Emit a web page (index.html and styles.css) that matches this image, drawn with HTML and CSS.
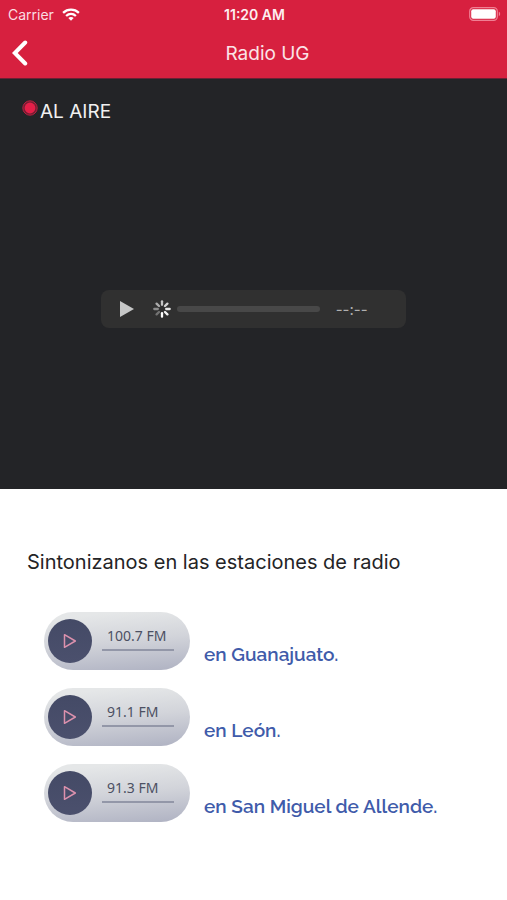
FILE: index.html
```html
<!DOCTYPE html>
<html lang="es">
<head>
<meta charset="utf-8">
<meta name="viewport" content="width=device-width, initial-scale=1">
<title>Radio UG</title>
<link rel="stylesheet" href="styles.css">
</head>
<body>
<header class="header">
  <div class="status">
    <div class="carrier">
      <span>Carrier</span>
      <svg class="wifi" width="18" height="13" viewBox="0 0 18 13" fill="none" stroke="currentColor" stroke-width="2.3" aria-hidden="true">
        <path d="M1.1 4.8C5.6.6 12.4.6 16.9 4.8M4.1 8C7 5.3 11 5.3 13.9 8"/>
        <path d="M9 12.8 6.3 10.1C7.8 8.7 10.2 8.7 11.7 10.1Z" fill="currentColor" stroke="none"/>
      </svg>
    </div>
    <time class="clock">11:20 AM</time>
    <svg class="battery" width="32" height="14" viewBox="0 0 32 14" aria-hidden="true">
      <rect x=".7" y=".7" width="27.6" height="12.6" rx="3.6" fill="none" stroke="#f07f93" stroke-width="1.2"/>
      <rect x="2.2" y="2.2" width="24.6" height="9.6" rx="2" fill="#fff"/>
      <path d="M29.8 4.8C31.6 5.2 31.6 8.8 29.8 9.2Z" fill="#f07f93"/>
    </svg>
  </div>
  <div class="navbar">
    <button class="back" type="button" aria-label="Volver">
      <svg width="16" height="26" viewBox="0 0 16 26" fill="none" stroke="currentColor" stroke-width="4" stroke-linecap="round" stroke-linejoin="miter" aria-hidden="true"><path d="M13.2 2.5 2.8 13l10.4 10.5"/></svg>
    </button>
    <h1 class="title">Radio UG</h1>
  </div>
</header>
<main>
  <section class="stage">
    <p class="live">
      <svg width="16" height="16" viewBox="0 0 16 16" aria-hidden="true"><circle cx="8" cy="8" r="7.2" fill="#741d32" stroke="#b72140" stroke-width="1"/><circle cx="8" cy="8" r="5.4" fill="#e51f48"/></svg>
      <span>AL AIRE</span>
    </p>
    <div class="player">
      <button class="play" type="button" aria-label="Reproducir">
        <svg width="14" height="16" viewBox="0 0 14 16" fill="currentColor" aria-hidden="true"><path d="M0 0 14 8 0 16Z"/></svg>
      </button>
      <svg class="spinner" width="18" height="18" viewBox="-9 -9 18 18" stroke="#fff" stroke-width="2.3" stroke-linecap="round" aria-hidden="true">
        <path d="M0-4.2V-7.7" opacity=".72"/>
        <path d="M3-3 5.4-5.4" opacity=".8"/>
        <path d="M4.2 0H7.7" opacity=".88"/>
        <path d="M3 3 5.4 5.4" opacity=".94"/>
        <path d="M0 4.2V7.7"/>
        <path d="M-3 3-5.4 5.4" opacity=".32"/>
        <path d="M-4.2 0H-7.7" opacity=".45"/>
        <path d="M-3-3-5.4-5.4" opacity=".6"/>
      </svg>
      <input class="track" type="range" min="0" max="100" value="0" aria-label="Progreso">
      <span class="time">--:--</span>
    </div>
  </section>
  <section class="stations">
    <h2 class="heading">Sintonizanos en las estaciones de radio</h2>
    <ul class="list">
      <li class="station">
        <button class="pill" type="button">
          <span class="disc"><svg width="14" height="16" viewBox="0 0 14 16" aria-hidden="true"><path d="M1.5 1.7 12.3 8 1.5 14.3Z"/></svg></span>
          <span class="freq">100.7 FM</span>
        </button>
        <a class="place" href="#guanajuato">en Guanajuato.</a>
      </li>
      <li class="station">
        <button class="pill" type="button">
          <span class="disc"><svg width="14" height="16" viewBox="0 0 14 16" aria-hidden="true"><path d="M1.5 1.7 12.3 8 1.5 14.3Z"/></svg></span>
          <span class="freq">91.1 FM</span>
        </button>
        <a class="place" href="#leon">en León.</a>
      </li>
      <li class="station">
        <button class="pill" type="button">
          <span class="disc"><svg width="14" height="16" viewBox="0 0 14 16" aria-hidden="true"><path d="M1.5 1.7 12.3 8 1.5 14.3Z"/></svg></span>
          <span class="freq">91.3 FM</span>
        </button>
        <a class="place" href="#allende">en San Miguel de Allende.</a>
      </li>
    </ul>
  </section>
</main>
</body>
</html>
```
FILE: styles.css
```css
* {
  box-sizing: border-box;
}

body {
  margin: 0;
  background: #fff;
  color: #242426;
  font-family: Inter, "Liberation Sans", sans-serif;
}

button {
  padding: 0;
  border: 0;
  background: none;
  color: inherit;
  font: inherit;
  cursor: pointer;
}

/* Header */
.header {
  background: #d7203f;
  color: #fff;
  border-bottom: 1px solid #6b2034;
}

.status,
.navbar {
  display: grid;
  grid-template-columns: 1fr auto 1fr;
  align-items: center;
}

.status {
  height: 28px;
  padding: 0 6px 0 8px;
  font-size: 14px;
}

.carrier {
  display: flex;
  align-items: center;
  gap: 8px;
  color: #fbdde2;
}

.wifi {
  color: #fff;
}

.clock {
  font-weight: 600;
  color: #fdeef0;
}

.battery {
  justify-self: end;
}

.navbar {
  height: 50px;
  padding: 0 12px;
}

.back {
  display: flex;
  justify-self: start;
}

.title {
  grid-column: 2;
  margin: 0 -28px 0 0;
  color: #fbe3e7;
  font-size: 19px;
  font-weight: 400;
}

/* Live player */
.stage {
  display: grid;
  grid-template-rows: 1fr auto 1fr;
  height: 410px;
  padding-top: 50px;
  background: #232427;
}

.live {
  display: flex;
  align-items: flex-start;
  gap: 2px;
  margin: -50px 0 0;
  padding: 21px 22px;
  color: #f1f1f1;
  font-size: 19px;
  line-height: 24px;
}

.player {
  display: flex;
  align-items: center;
  justify-self: center;
  width: 60%;
  height: 38px;
  padding: 0 38px 0 19px;
  border-radius: 8px;
  background: #303030;
}

.play {
  display: flex;
  color: #c6c7c7;
}

.spinner {
  flex: none;
  margin: 0 6px 0 19px;
}

.track {
  flex: 1;
  min-width: 0;
  height: 6px;
  margin: 0 16px 0 0;
  border-radius: 3px;
  background: #484848;
  appearance: none;
}

.track::-webkit-slider-thumb {
  width: 0;
  height: 0;
  appearance: none;
}

.time {
  color: #b0b0b0;
  font-size: 15px;
}

/* Stations */
.stations {
  padding: 59px 27px;
}

.heading {
  margin: 0;
  font-size: 20px;
  font-weight: 400;
  line-height: 28px;
}

.list {
  display: grid;
  gap: 18px;
  margin: 0;
  padding: 36px 0 0 17px;
  list-style: none;
}

.station {
  display: flex;
  align-items: flex-end;
  gap: 14px;
}

.pill {
  display: flex;
  align-items: center;
  gap: 10px;
  flex: none;
  width: 146px;
  height: 58px;
  padding: 0 4px;
  border-radius: 29px;
  background: linear-gradient(175deg, #e5e7e8 10%, #d2d4da 50%, #b0b3c3 98%);
}

.disc {
  display: grid;
  place-items: center;
  width: 44px;
  height: 44px;
  border-radius: 50%;
  background: linear-gradient(#444a66, #4b506d);
}

.disc path {
  fill: none;
  stroke: #dc91ad;
  stroke-width: 1.5;
  stroke-linejoin: round;
}

.freq {
  width: 72px;
  margin-bottom: 6px;
  padding: 0 5px 3px;
  border-bottom: 2px solid #9397a8;
  color: #4c5063;
  font-family: "Noto Sans", "Open Sans", sans-serif;
  font-size: 14px;
  line-height: 20px;
  text-align: left;
}

.place {
  padding-bottom: 4px;
  color: #405baa;
  font-family: Raleway, Inter, sans-serif;
  font-size: 19px;
  font-weight: 600;
  line-height: 24px;
  text-decoration: none;
}
```
